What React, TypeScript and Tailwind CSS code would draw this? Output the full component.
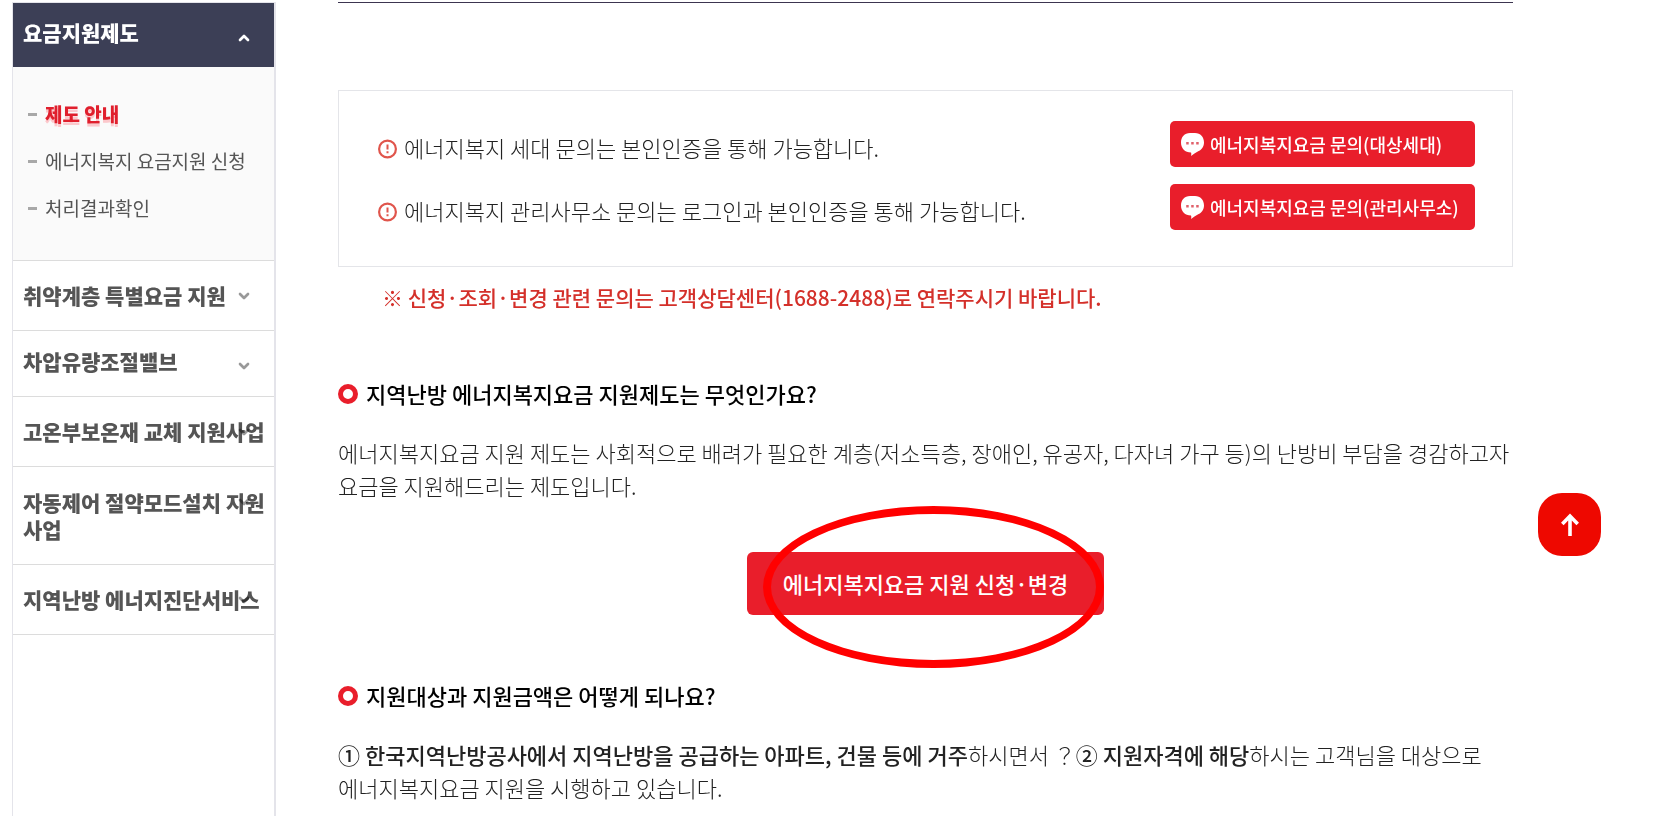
import { ChevronDown, ChevronUp } from 'lucide-react';

const subMenu = [
  { label: '제도 안내', active: true },
  { label: '에너지복지 요금지원 신청', active: false },
  { label: '처리결과확인', active: false },
];

const menu = [
  { label: '취약계층 특별요금 지원', size: 'h-[70px]' },
  { label: '차압유량조절밸브', size: 'h-[66px] pb-1' },
  { label: '고온부보온재 교체 지원사업', size: 'h-[70px]' },
  { label: '자동제어 절약모드설치 지원사업', size: 'h-[98px]' },
  { label: '지역난방 에너지진단서비스', size: 'h-[70px]' },
];

const inquiries = [
  { text: '에너지복지 세대 문의는 본인인증을 통해 가능합니다.', button: '에너지복지요금 문의(대상세대)' },
  { text: '에너지복지 관리사무소 문의는 로그인과 본인인증을 통해 가능합니다.', button: '에너지복지요금 문의(관리사무소)' },
];

function NoticeIcon() {
  return (
    <svg viewBox="0 0 20 22" className="mt-[2px] h-[22px] w-5 shrink-0" fill="none" stroke="#e0554c" aria-hidden="true">
      <circle cx="9.5" cy="12" r="8.4" strokeWidth="2.2" />
      <path d="M9.5 7.5v5M9.500 14.200v2" strokeWidth="2" />
    </svg>
  );
}

function ChatIcon() {
  return (
    <svg viewBox="0 0 23 23" className="h-[23px] w-[23px] shrink-0" aria-hidden="true">
      <path
        d="M9 0h5C19.500 0 23 4 23 9.500c0 4-2.500 7.500-5.800 8.800-2.300 1-4.200 2.700-7.200 4.700.4-1.500.4-2.500 0-3.500C4 19.500 0 15.500 0 9.500 0 4 3.500 0 9 0z"
        fill="#fff"
      />
      <path d="M5.200 9h2.500v2.500H5.200zM10.200 9h2.500v2.500h-2.500zM15.200 9h2.500v2.500h-2.500z" fill="#e0606a" />
    </svg>
  );
}

function SectionTitle({ children }: { children: string }) {
  return (
    <h2 className="flex items-center gap-2 text-[22px] leading-8 font-medium text-black">
      <span className="mt-[2px] h-5 w-5 shrink-0 rounded-full border-[5px] border-[#e91e2b]" />
      {children}
    </h2>
  );
}

function Sidebar() {
  return (
    <nav className="w-[264px] shrink-0 border-t border-r-2 border-l border-[#e4e4ea]">
      <button type="button" className="flex h-16 w-full items-center justify-between bg-[#3c3f56] pr-[22px] pl-[10px] text-left">
        <span className="pb-1 text-[21px] font-black text-white">요금지원제도</span>
        <ChevronUp className="mt-[6px] h-4 w-4 text-white" strokeWidth={4} />
      </button>
      <ul className="flex flex-col border-b border-[#dcdcdc] bg-[#fafafa] pt-6 pb-7">
        {subMenu.map((item) => (
          <li key={item.label} className="flex h-[47px] items-center gap-2 pl-[15px]">
            <span className="h-[3px] w-[9px] shrink-0 bg-[#a8a8a8]" />
            <a
              href="#"
              className={
                item.active
                  ? 'text-[19px] font-black whitespace-nowrap text-[#e01f2d] [text-shadow:0_3px_0_#fcc8cc]'
                  : 'text-[19px] whitespace-nowrap text-[#555]'
              }
            >
              {item.label}
            </a>
          </li>
        ))}
      </ul>
      {menu.map((item) => (
        <a
          key={item.label}
          href="#"
          className={`relative flex items-center border-b border-[#dcdcdc] pl-[10px] ${item.size}`}
        >
          <span className="text-[21px] leading-[27px] font-black break-all text-[#555]">{item.label}</span>
          <ChevronDown className="absolute top-[27px] right-[22px] h-4 w-4 text-[#999] mix-blend-multiply" strokeWidth={4} />
        </a>
      ))}
    </nav>
  );
}

export default function App() {
  return (
    <div className="flex min-h-screen bg-white pt-[2px] pl-3 font-['Noto_Sans_CJK_KR',sans-serif] text-[#222]">
      <Sidebar />

      <main className="mr-[158px] ml-[62px] min-w-0 flex-1 border-t border-[#3c3550]">
        {/* Inquiry box */}
        <section className="mt-[87px] flex flex-col gap-[17px] border border-[#e4e5e9] pt-[30px] pr-[37px] pb-9 pl-[39px]">
          {inquiries.map((item) => (
            <div key={item.button} className="flex items-center justify-between">
              <p className="flex items-center gap-[6px] pt-[6px] text-[22px] font-light">
                <NoticeIcon />
                {item.text}
              </p>
              <button
                type="button"
                className="flex h-[46px] w-[305px] items-center gap-[6px] rounded-[5px] bg-[#e91e2b] pl-[11px] text-lg font-medium whitespace-nowrap text-white"
              >
                <ChatIcon />
                {item.button}
              </button>
            </div>
          ))}
        </section>

        <p className="mt-[14px] pl-11 text-[21px] leading-8 font-medium text-[#d4302a]">
          ※ 신청·조회·변경 관련 문의는 고객상담센터(1688-2488)로 연락주시기 바랍니다.
        </p>

        <section className="mt-16">
          <SectionTitle>지역난방 에너지복지요금 지원제도는 무엇인가요?</SectionTitle>
          <p className="mt-[27px] text-[22px] leading-[33px] font-light">
            에너지복지요금 지원 제도는 사회적으로 배려가 필요한 계층(저소득층, 장애인, 유공자, 다자녀 가구 등)의 난방비 부담을 경감하고자
            <br />
            요금을 지원해드리는 제도입니다.
          </p>
          <div className="relative mt-[50px] flex justify-center">
            <button type="button" className="h-[63px] w-[357px] rounded-md bg-[#e91e2b] text-[22px] font-medium text-white">
              에너지복지요금 지원 신청·변경
            </button>
            {/* Hand-drawn highlight over the apply button */}
            <span className="pointer-events-none absolute -top-[46px] left-1/2 ml-[-163px] h-[162px] w-[341px] rounded-[50%] border-8 border-[#ff0000]" />
          </div>
        </section>

        <section className="mt-16">
          <SectionTitle>지원대상과 지원금액은 어떻게 되나요?</SectionTitle>
          <p className="mt-[27px] text-[22px] leading-[33px] font-light">
            <strong className="font-medium">① 한국지역난방공사에서 지역난방을 공급하는 아파트, 건물 등에 거주</strong>
            하시면서 ？<strong className="font-medium">② 지원자격에 해당</strong>하시는 고객님을 대상으로
            <br />
            에너지복지요금 지원을 시행하고 있습니다.
          </p>
        </section>
      </main>

      <button
        type="button"
        aria-label="맨 위로"
        className="fixed right-[70px] bottom-[260px] flex h-[63px] w-[63px] items-center justify-center rounded-3xl bg-[#ee0800] text-white"
      >
        <svg viewBox="0 0 18 23" className="h-[23px] w-[18px]" fill="none" stroke="currentColor" strokeWidth="3.6" aria-hidden="true">
          <path d="M9 23V3M1.300 11L9 3l7.700 8" />
        </svg>
      </button>
    </div>
  );
}
